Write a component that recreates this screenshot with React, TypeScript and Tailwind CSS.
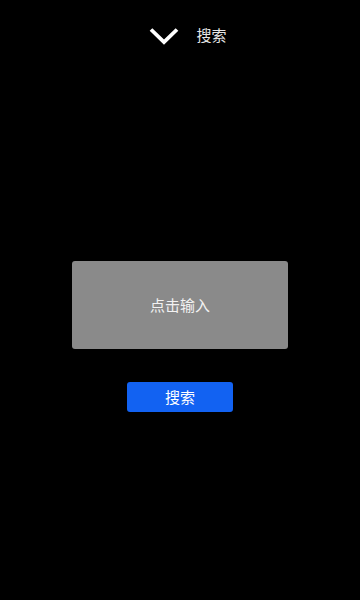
export default function App() {
  return (
    <div
      className="w-[360px] h-[600px] bg-black flex flex-col items-center"
      style={{ fontFamily: '"Noto Sans CJK SC", "Noto Sans", sans-serif' }}
    >
      <div className="w-full h-[72px] flex items-center justify-center pl-4 gap-[17px]">
        <svg width="30" height="18" viewBox="0 0 30 18" fill="none">
          <path d="M2 2.5 L15 15 L28 2.5" stroke="#ffffff" strokeWidth="3.8" strokeLinecap="butt" strokeLinejoin="miter" />
        </svg>
        <span className="text-[15px] text-[#e6e6e6] leading-none mb-1">搜索</span>
      </div>
      <div className="mt-[189px] w-[216px] h-[88px] bg-[#8a8a8a] rounded-[3px] flex items-center justify-center">
        <span className="text-[15px] text-[#f2f2f2]">点击输入</span>
      </div>
      <button className="mt-[33px] w-[106px] h-[30px] bg-[#1262f2] rounded-[3px] flex items-center justify-center">
        <span className="text-[15px] text-white">搜索</span>
      </button>
    </div>
  );
}
